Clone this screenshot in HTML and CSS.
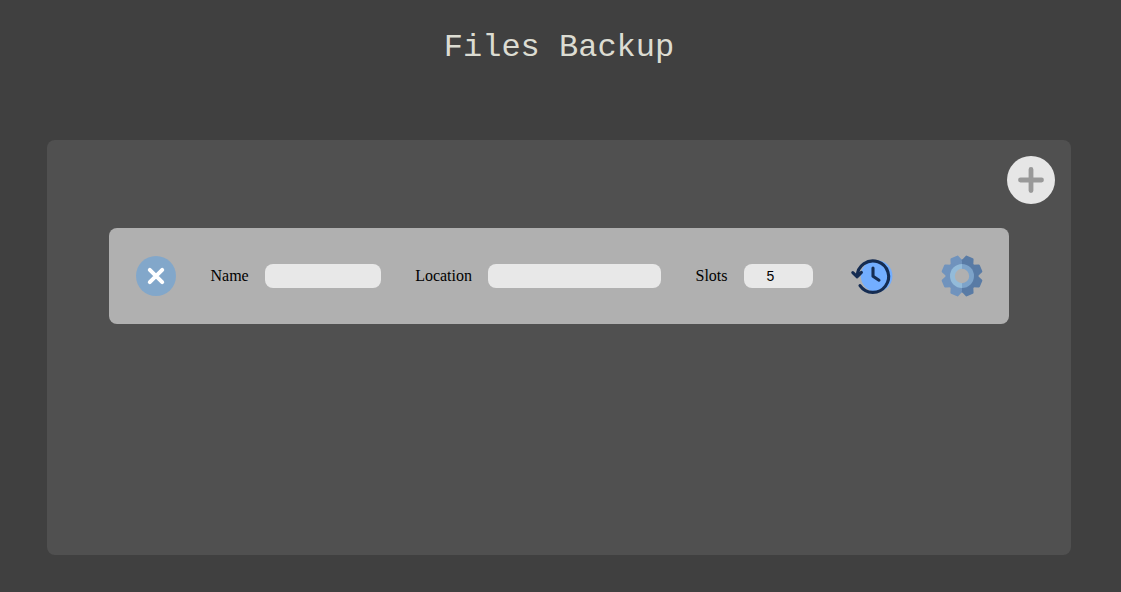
FILE: index.html
```html
<!DOCTYPE html>
<html lang="en">
<head>
  <meta charset="utf-8">
  <meta name="viewport" content="width=device-width, initial-scale=1">
  <title>Files Backup</title>
  <link rel="stylesheet" href="styles.css">
</head>
<body class="page">
  <header class="header">
    <h1 class="title">Files Backup</h1>
  </header>
  <main class="panel">
    <div class="toolbar">
      <button class="icon-button icon-button-large" type="button" aria-label="Add backup">
        <svg viewBox="0 0 48 48" aria-hidden="true">
          <circle cx="24" cy="24" r="24" fill="#e6e6e6"/>
          <path d="M24 13.5v21M13.5 24h21" stroke="#999" stroke-width="4.8" stroke-linecap="round"/>
        </svg>
      </button>
    </div>
    <form class="entry">
      <button class="icon-button" type="button" aria-label="Remove backup">
        <svg viewBox="0 0 40 40" aria-hidden="true">
          <circle cx="20" cy="20" r="20" fill="#82a7ca"/>
          <path d="M13.8 13.8l12.4 12.4M26.2 13.8L13.8 26.2" stroke="#fff" stroke-width="4" stroke-linecap="round"/>
        </svg>
      </button>
      <div class="field">
        <label for="name">Name</label>
        <input class="input input-name" id="name" type="text">
      </div>
      <div class="field">
        <label for="location">Location</label>
        <input class="input input-location" id="location" type="text">
      </div>
      <div class="field">
        <label for="slots">Slots</label>
        <input class="input input-slots" id="slots" type="number" min="1" value="5">
      </div>
      <div class="actions">
        <button class="icon-button" type="button" aria-label="Restore history">
          <svg viewBox="0 0 40 40" fill="none" aria-hidden="true">
            <circle cx="25.6" cy="20" r="15.8" fill="#73aeff"/>
            <path d="M6.2 20.5A15.7 15.7 0 1 1 9 29.6M1.8 16.6L6.2 20.8L10.4 16.4M22 12v8.2l6 4" stroke="#152c52" stroke-width="3.1" stroke-linecap="round" stroke-linejoin="round"/>
          </svg>
        </button>
        <button class="icon-button" type="button" aria-label="Settings">
          <svg viewBox="0 0 40 40" aria-hidden="true">
            <defs>
              <path id="tooth" d="M13.6 6L15.6 .4Q15.8 -.6 16.8 -.6H23.2Q24.2 -.6 24.4 .4L26.4 6Z"/>
            </defs>
            <g fill="#7093bd">
              <path d="M20 3.6a16.4 16.4 0 0 0 0 32.8z"/>
              <use href="#tooth" transform="rotate(-22.5 20 20)"/>
              <use href="#tooth" transform="rotate(-67.5 20 20)"/>
              <use href="#tooth" transform="rotate(-112.5 20 20)"/>
              <use href="#tooth" transform="rotate(-157.5 20 20)"/>
            </g>
            <g fill="#597ba5">
              <path d="M20 3.6a16.4 16.4 0 0 1 0 32.8z"/>
              <use href="#tooth" transform="rotate(22.5 20 20)"/>
              <use href="#tooth" transform="rotate(67.5 20 20)"/>
              <use href="#tooth" transform="rotate(112.5 20 20)"/>
              <use href="#tooth" transform="rotate(157.5 20 20)"/>
            </g>
            <path fill="#93bbd9" d="M20 8a12 12 0 0 0 0 24z"/>
            <path fill="#7da3c9" d="M20 8a12 12 0 0 1 0 24z"/>
            <circle cx="20" cy="20" r="7.2" fill="#b0b0b0"/>
          </svg>
        </button>
      </div>
    </form>
  </main>
</body>
</html>
```
FILE: styles.css
```css
* {
  box-sizing: border-box;
}

.page {
  display: flex;
  flex-direction: column;
  min-height: 100vh;
  margin: 0;
  padding: 30px 50px 37px 47px;
  background: #404040;
  color: #000;
  font-family: "Liberation Serif", "Times New Roman", serif;
  font-size: 16px;
}

.header {
  padding-bottom: 74px;
  text-align: center;
}

.title {
  margin: 0;
  color: #dcdcd2;
  font-family: "Courier New", "Liberation Mono", monospace;
  font-size: 32px;
  font-weight: 400;
  line-height: 36px;
}

.panel {
  flex: 1;
  padding: 16px;
  border-radius: 8px;
  background: #505050;
}

.toolbar {
  display: flex;
  justify-content: flex-end;
}

.icon-button {
  flex: none;
  width: 40px;
  height: 40px;
  padding: 0;
  border: 0;
  background: none;
  cursor: pointer;
}

.icon-button-large {
  width: 48px;
  height: 48px;
}

.icon-button svg {
  display: block;
  width: 100%;
  height: 100%;
  overflow: visible;
}

.entry {
  display: flex;
  flex-wrap: wrap;
  align-items: center;
  justify-content: space-between;
  gap: 16px;
  margin: 24px 46px 0;
  padding: 28px 27px;
  border-radius: 8px;
  background: #b0b0b0;
}

.field {
  display: flex;
  align-items: center;
  gap: 16px;
}

.input {
  height: 24px;
  padding: 0 8px;
  border: 0;
  border-radius: 8px;
  background: #e8e8e8;
  color: #000;
  font-family: "Liberation Sans", Arial, sans-serif;
  font-size: 14px;
}

.input-name {
  width: 116px;
}

.input-location {
  width: 173px;
}

.input-slots {
  width: 69px;
  text-align: center;
}

.actions {
  display: flex;
  gap: 51px;
  padding-left: 4px;
}
```
